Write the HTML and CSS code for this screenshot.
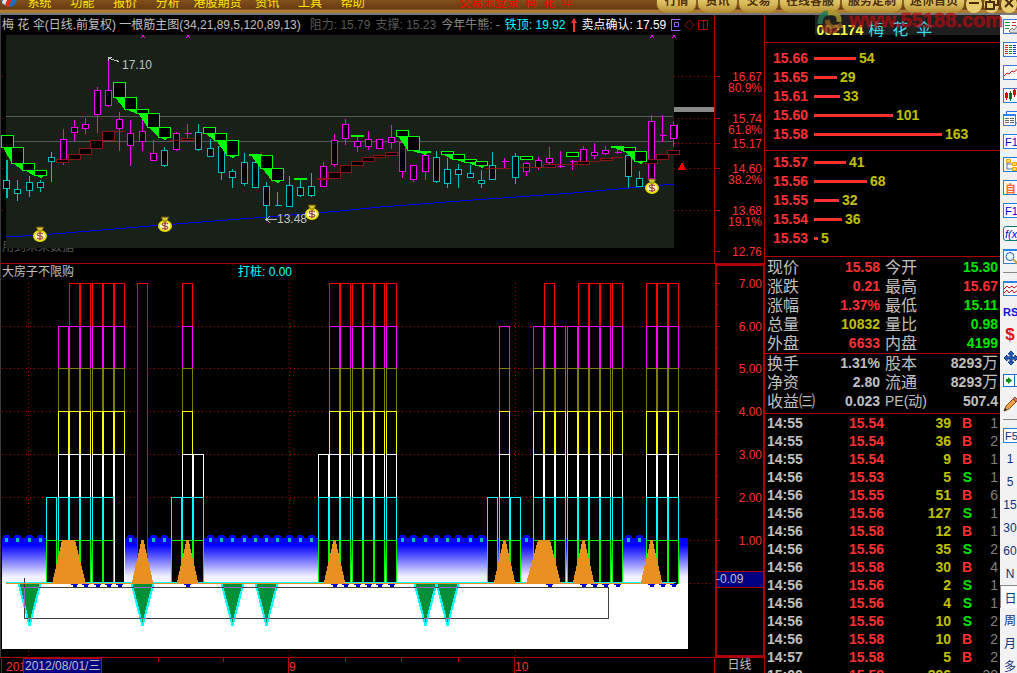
FILE: index.html
```html
<!DOCTYPE html>
<html lang="zh-CN">
<head>
    <meta charset="UTF-8">
    <meta name="viewport" content="width=device-width, initial-scale=1.0">
    <title>梅花伞 002174</title>
    <link rel="stylesheet" href="styles.css">
</head>
<body>

    <div class="app">

        <!-- Menu Bar -->
        <header class="topbar">
            <svg class="logo" width="18" height="20" viewBox="0 0 18 20">
                <circle cx="9" cy="10" r="8" fill="#1c6fc0"/>
                <path d="M2 14 Q5 2 16 5 Q9 7 7 17 Z" fill="#e8e8e8"/>
                <path d="M5 17 Q7 6 16 7 L14 10 Q11 9 9 18 Z" fill="#e03010"/>
            </svg>
            <nav class="menu">
                <button>系统</button>
                <button>功能</button>
                <button>报价</button>
                <button>分析</button>
                <button class="wide">港股期货</button>
                <button>资讯</button>
                <button>工具</button>
                <button>帮助</button>
            </nav>
            <span class="login-state">交易未登录 <i>梅</i><i>花</i><i>伞</i></span>
            <div class="pills">
                <button>行情</button>
                <button>资讯</button>
                <button>交易</button>
                <button class="wide">在线客服</button>
                <button class="wide">服务定制</button>
                <button class="wide">迷你首页</button>
            </div>
            <div class="window-buttons">
                <button aria-label="最小化"><svg width="14" height="14" viewBox="0 0 14 14"><path d="M2 6H12" stroke="#4a2c08" stroke-width="2"/></svg></button>
                <button aria-label="还原"><svg width="14" height="14" viewBox="0 0 14 14"><path d="M5 5V1H13V8H9M1 5H9V12H1Z" fill="none" stroke="#4a2c08" stroke-width="2"/></svg></button>
                <button aria-label="关闭"><svg width="14" height="14" viewBox="0 0 14 14"><path d="M3 2L11 10M11 2L3 10" stroke="#4a2c08" stroke-width="2"/></svg></button>
            </div>
        </header>

        <div class="workspace">

            <!-- Charts -->
            <main class="charts">
                <section class="pane">
                    <div class="plot">
                        <div class="pane-title">
                            <span class="name">梅 花 伞(日线.前复权) 一根筋主图(34,21,89,5,120,89,13)</span>
                            <span class="dark">阻力: 15.79</span>
                            <span class="dark">支撑: 15.23</span>
                            <span class="gray">今年牛熊: -</span>
                            <span class="cyan">铁顶: 19.92</span>
                            <svg class="up" width="6" height="14" viewBox="0 0 6 14"><path d="M2 3H4V14H2Z M0 5L3 0L6 5Z" fill="#ff3030"/></svg>
                            <span class="white">卖点确认: 17.59</span>
                            <svg class="pane-icons" width="39" height="12" viewBox="0 0 39 12" fill="none">
                                <path d="M0 0.500H9.500M0.500 1V11.500H9.500M3.500 3.500H7.500V7.500H3.500Z" stroke="#a060ff"/>
                                <path d="M18.500 1L23 6L18.500 11L14 6Z" stroke="#801010"/>
                                <path d="M27.500 1.500H36.500V10.500H27.500ZM32.500 1V11" stroke="#b00000"/>
                            </svg>
                        </div>
                        <svg id="kline" class="kline" viewBox="0 35 714 228" preserveAspectRatio="none"></svg>
                    </div>
                    <svg id="kline-axis" class="axis" viewBox="714 15 51 248" preserveAspectRatio="none"></svg>
                </section>

                <section class="pane">
                    <div class="plot">
                        <div class="pane-title low">
                            <span class="name">大房子不限购</span>
                            <span class="cyan pile">打桩: 0.00</span>
                        </div>
                        <svg id="steps" class="steps" viewBox="0 280 714 377" preserveAspectRatio="none"></svg>
                    </div>
                    <svg id="steps-axis" class="axis" viewBox="714 264 51 393" preserveAspectRatio="none"></svg>
                </section>

                <footer class="dates">
                    <svg id="dates" viewBox="0 657 714 16" preserveAspectRatio="none"></svg>
                    <span class="period">日线</span>
                </footer>
            </main>

            <!-- Quote Panel -->
            <aside class="quotes">
                <h1><b>002174</b><span>梅</span><span>花</span><span>伞</span></h1>
                <div id="asks" class="orders asks"></div>
                <div id="bids" class="orders bids"></div>
                <table class="stats main-stats">
                    <tr><th>现价</th><td class="red">15.58</td><th>今开</th><td class="green">15.30</td></tr>
                    <tr><th>涨跌</th><td class="red">0.21</td><th>最高</th><td class="red">15.67</td></tr>
                    <tr><th>涨幅</th><td class="red">1.37%</td><th>最低</th><td class="green">15.11</td></tr>
                    <tr><th>总量</th><td class="yellow">10832</td><th>量比</th><td class="green">0.98</td></tr>
                    <tr><th>外盘</th><td class="red">6633</th><th>内盘</th><td class="green">4199</td></tr>
                </table>
                <table class="stats more-stats">
                    <tr><th>换手</th><td>1.31%</td><th>股本</th><td>8293<i>万</i></td></tr>
                    <tr><th>净资</th><td>2.80</td><th>流通</th><td>8293<i>万</i></td></tr>
                    <tr><th>收益㈢</th><td>0.023</td><th class="pe">PE(动)</th><td>507.4</td></tr>
                </table>
                <table class="ticks"><tbody id="ticks"></tbody></table>
            </aside>

            <!-- Tool Bar -->
            <nav class="tools">
                <button aria-label="自选"><svg viewBox="0 0 18 16"><rect x="0.500" y="0.500" width="20" height="14" fill="#fff" stroke="#3a78d8"/><path d="M2 3.500H7M2 6.500H7M2 9.500H6" stroke="#109030"/><path d="M9 3.500H13M9 6.500H13" stroke="#e02020"/><path d="M6 12L9 9L11 11L15 6V14H8Z" fill="#ddd" stroke="#777"/></svg></button>
                <button aria-label="行情列表"><svg viewBox="0 0 18 16"><rect x="0.500" y="0.500" width="20" height="14" fill="#fff" stroke="#3a78d8"/><path d="M2 3.500H5M2 5.500H5M2 7.500H5M2 9.500H5M2 11.500H5" stroke="#e02020"/><path d="M6 3.500H9M6 5.500H9M6 7.500H9M6 9.500H9M6 11.500H9" stroke="#109030"/><path d="M10 3.500H13M10 5.500H13M10 7.500H13M10 9.500H13M10 11.500H13" stroke="#1030c0"/></svg></button>
                <button aria-label="分时图"><svg viewBox="0 0 18 16"><rect x="0.500" y="0.500" width="20" height="14" fill="#fff" stroke="#3a78d8"/><path d="M1 11L4 8L6 9L9 6L11 7L16 3" fill="none" stroke="#d01010"/></svg></button>
                <button aria-label="K线图"><svg viewBox="0 0 18 16"><rect x="0.500" y="0.500" width="20" height="14" fill="#fff" stroke="#3a78d8"/><path d="M3.500 4V12M11.500 1V9" stroke="#e00000"/><path d="M2 5H5V10H2ZM10 2H13V7H10Z" fill="#e00000"/><path d="M7.500 3V13" stroke="#087020"/><path d="M6 5H9V11H6Z" fill="#087020"/></svg></button>
                <button aria-label="窗口"><svg viewBox="0 0 18 16"><path d="M3.500 3V0.500H20V12H13" fill="#fff" stroke="#2a70e0"/><rect x="0.500" y="3.500" width="12" height="11" fill="#fff" stroke="#3a78d8"/><path d="M0 4H13" stroke="#2a80f0" stroke-width="2"/><path d="M2 7.500H6M7 7.500H11M2 9.500H6M7 9.500H11M2 11.500H6M7 11.500H11" stroke="#666"/></svg></button>
                <button class="boxed">F10</button>
                <button aria-label="板块"><svg viewBox="0 0 18 16"><rect x="0.500" y="0.500" width="20" height="14" fill="#fff" stroke="#1080e0"/><path d="M4 5V12H10M4 7H10" fill="none" stroke="#4070b0"/><path d="M3.500 2.500H7.500V5.500H3.500ZM9.500 5.500H13.500V8.500H9.500ZM9.500 10.500H13.500V13.500H9.500Z" fill="#ffe060" stroke="#f0a000"/></svg></button>
                <button class="boxed orange">自</button>
                <button class="boxed">F12</button>
                <button class="boxed fx">f(x)</button>
                <button aria-label="查找"><svg viewBox="0 0 18 16"><rect x="0.500" y="0.500" width="20" height="14" fill="#fff" stroke="#3a78d8"/><path d="M1 1H18" stroke="#2a80f0" stroke-width="2"/><circle cx="7" cy="7.500" r="4" fill="#e8f6ff" stroke="#2060b0"/><path d="M10 10L15 15" stroke="#d0a040" stroke-width="2"/></svg></button>
                <hr>
                <button aria-label="指标"><svg viewBox="0 0 18 16"><rect x="0.500" y="0.500" width="20" height="14" fill="#fff" stroke="#3a78d8"/><path d="M1 1H18" stroke="#2a80f0" stroke-width="2"/><path d="M1 8L4 5L6 7L9 5L11 7L15 4M1 12L4 9L6 12L9 9L11 12L15 9" fill="none" stroke="#d01010"/></svg></button>
                <button class="rsi">RSI</button>
                <button class="dollar">$</button>
                <button aria-label="移动"><svg viewBox="0 0 18 16"><path d="M8 1L11 4H9V7H12V5L15 8L12 11V9H9V12H11L8 15L5 12H7V9H4V11L1 8L4 5V7H7V4H5Z" fill="#2060c0" stroke="#103880"/></svg></button>
                <button aria-label="下一个"><svg viewBox="0 0 18 16"><rect x="0.500" y="1.500" width="20" height="12" fill="#fff" stroke="#1070d0"/><path d="M11.500 1V14" stroke="#1070d0"/><path d="M3 6H5V4L9 7.500L5 11V9H3Z" fill="#089010"/></svg></button>
                <button aria-label="画线"><svg viewBox="0 0 18 16"><path d="M1 15L3 10L10 3L13 6L6 13Z" fill="#f0a040" stroke="#805020"/><path d="M10 3L12 1L15 4L13 6Z" fill="#e07060" stroke="#805020"/><path d="M1 15L2 12L4 14Z" fill="#222"/></svg></button>
                <hr>
                <button class="boxed f5">F5</button>
                <button>1</button>
                <button>5</button>
                <button>15</button>
                <button>30</button>
                <button>60</button>
                <button>N</button>
                <button class="active">日</button>
                <button>周</button>
                <button>月</button>
                <button>多</button>
            </nav>
        </div>

        <!-- Site mark over the page corner -->
        <div class="mark">
            <svg width="32" height="26" viewBox="0 0 32 26" fill="none" stroke-width="5" opacity="0.8">
                <path d="M5 15Q5 4 14 4" stroke="#1c7b54"/>
                <path d="M13 4Q25 2 24 13" stroke="#b09a28"/>
                <path d="M12 11Q14 22 27 16" stroke="#8f5a22"/>
                <path d="M8 17Q14 26 22 20" stroke="#86201c"/>
            </svg>
            <span>www.55188.com</span>
        </div>
    </div>

    <script src="script.js"></script>
</body>
</html>
```

FILE: styles.css
```css
/* --- Base --- */
* {
    box-sizing: border-box;
}

body {
    margin: 0;
    background-color: #000;
    color: #c0c0c0;
    font-family: "Liberation Sans", "Noto Sans CJK SC", sans-serif;
    font-size: 12px;
}

button {
    margin: 0;
    padding: 0;
    border: none;
    background: none;
    font-family: inherit;
    font-size: 12px;
    color: inherit;
    white-space: nowrap;
    cursor: pointer;
}

svg {
    display: block;
    flex-shrink: 0;
}

.app {
    position: relative;
    display: flex;
    flex-direction: column;
    height: 100vh;
    overflow: hidden;
}

/* --- Menu Bar --- */
.topbar {
    display: flex;
    align-items: flex-end;
    flex-shrink: 0;
    height: 15px;
    overflow: hidden;
    border-bottom: 2px solid #777;
    background: linear-gradient(#80501c, #6b3d12 60%, #6b3d12 70%, #b08038 80%, #a87830);
}

.logo {
    margin-bottom: 4px;
}

.menu {
    display: flex;
    width: 356px;
}

.menu button {
    width: 43px;
    height: 19px;
    line-height: 19px;
    color: #ffe800;
}

.menu .wide {
    width: 57px;
}

.login-state {
    margin-left: 85px;
    line-height: 19px;
    color: #ff0000;
    white-space: nowrap;
}

.login-state i {
    margin-left: 3px;
    margin-right: 3px;
    font-style: normal;
}

.pills {
    display: flex;
    margin-left: auto;
}

.pills button {
    width: 41px;
    height: 22px;
    line-height: 19px;
    padding-bottom: 1px;
    border-radius: 0 0 10px 10px;
    background: linear-gradient(#f0dc90, #d8b858 60%, #b08830);
    border-left: 1px solid #8a6020;
    border-right: 1px solid #8a6020;
    color: #503008;
    font-weight: bold;
}

.pills .wide {
    width: 62px;
}

.window-buttons {
    display: flex;
    gap: 2px;
    width: 52px;
    padding-left: 1px;
}

.window-buttons button {
    width: 16px;
    height: 17px;
    padding-left: 1px;
    padding-bottom: 2px;
    border-radius: 8px;
    background-color: #e8cc70;
}

/* --- Workspace --- */
.workspace {
    display: flex;
    flex: 1;
    min-height: 0;
}

.charts {
    flex: 1;
    min-width: 0;
}

.pane {
    display: flex;
}

.pane:first-child {
    border-bottom: 1px solid #b00000;
}

.plot {
    flex: 1;
    min-width: 0;
    box-shadow: inset 1px 0 #3a3a3a;
}

.kline, .steps, .axis, .dates svg {
    shape-rendering: crispEdges;
}

.kline {
    width: 100%;
    height: 228px;
}

.steps {
    width: 100%;
    height: 377px;
}

.axis {
    width: 51px;
}

.pane-title {
    display: flex;
    align-items: center;
    gap: 5px;
    height: 20px;
    padding-left: 2px;
    line-height: 18px;
    white-space: nowrap;
    overflow: hidden;
}

.pane-title .name {
    margin-right: 4px;
}

.low {
    height: 16px;
}

.pane-title .pile {
    margin-left: 155px;
}

.dark { color: #585858; }
.gray { color: #888888; }
.cyan { color: #00ffff; }
.white { color: #ffffff; }
.red { color: #ff3030; }
.green { color: #00e600; }
.yellow { color: #c0c000; }

/* --- Date Row --- */
.dates {
    display: flex;
    border-top: 1px solid #b00000;
}

.dates svg {
    flex: 1;
    min-width: 0;
    height: 16px;
}

.period {
    width: 51px;
    height: 16px;
    line-height: 15px;
    text-align: center;
    border-left: 1px solid #b00000;
    border-right: 1px solid #b00000;
}

/* --- Quote Panel --- */
.quotes {
    width: 235px;
    flex-shrink: 0;
    font-size: 14px;
    overflow: hidden;
}

.quotes h1 {
    display: flex;
    justify-content: center;
    gap: 8px;
    margin: 0;
    height: 28px;
    line-height: 30px;
    border-bottom: 1px solid #b00000;
    padding-right: 16px;
    font-size: 16px;
    font-weight: normal;
    color: #20d8e8;
}

.quotes h1 b {
    margin-right: -3px;
    font-size: 14px;
    color: #ffff30;
}

.orders {
    border-bottom: 1px solid #b00000;
    padding-left: 8px;
    font-weight: bold;
}

.asks {
    padding-top: 6px;
    padding-bottom: 6px;
}

.bids {
    padding-top: 2px;
    padding-bottom: 8px;
}

.order {
    display: flex;
    align-items: center;
    height: 19px;
    line-height: 19px;
}

.order .price {
    width: 41px;
    color: #ff3030;
}

.order .bar {
    height: 3px;
    margin-right: 3px;
    background-color: #ff3030;
}

.order .volume {
    color: #c0c000;
}

table {
    width: 100%;
    border-collapse: separate;
    border-spacing: 0;
    table-layout: fixed;
}

th, td {
    padding: 0;
    white-space: nowrap;
}

.stats {
    border-bottom: 1px solid #b00000;
    padding-left: 2px;
    padding-right: 2px;
}

.stats tr {
    height: 19px;
    line-height: 19px;
}

.stats th {
    width: 50px;
    font-size: 16px;
    font-weight: normal;
    text-align: left;
}

.stats th:nth-child(3) {
    width: 54px;
    padding-left: 5px;
}

.stats .pe {
    font-size: 14px;
}

.stats td {
    text-align: right;
    font-weight: bold;
}

.stats td:nth-child(2) {
    width: 63px;
}

.stats i {
    font-style: normal;
    font-weight: normal;
    font-size: 16px;
    line-height: 16px;
}

.main-stats {
    padding-top: 1px;
}

.more-stats {
    padding-bottom: 2px;
}

.ticks tr {
    height: 18px;
    line-height: 18px;
}

.ticks td {
    font-weight: bold;
    text-align: right;
}

.ticks td:nth-child(1) {
    width: 40px;
    padding-left: 2px;
    text-align: left;
}

.ticks td:nth-child(2) { width: 79px; }
.ticks td:nth-child(3) { width: 67px; }
.ticks td:nth-child(4) { width: 21px; }

.ticks td:nth-child(5) {
    padding-right: 2px;
    font-weight: normal;
    color: #808080;
}

/* --- Tool Bar --- */
.tools {
    display: flex;
    flex-direction: column;
    width: 17px;
    flex-shrink: 0;
    padding-left: 3px;
    overflow: hidden;
    background-color: #f2f2f2;
    color: #103080;
}

.tools button {
    display: flex;
    flex-shrink: 0;
    align-items: center;
    justify-content: center;
    width: 14px;
    height: 23px;
}

.tools svg {
    width: 18px;
    height: 16px;
    margin-right: -4px;
}

.tools hr {
    width: 100%;
    height: 1px;
    flex-shrink: 0;
    margin: 4px 0;
    border: none;
    background-color: #888;
}

.tools .boxed {
    width: 20px;
    height: 15px;
    margin: 4px 0;
    border: 1px solid #2080e0;
    background-color: #fff;
    color: #0000d0;
    justify-content: flex-start;
    padding-left: 1px;
    font-size: 11px;
}

.tools .orange {
    color: #ff6820;
    font-weight: bold;
}

.tools .fx {
    border-color: #008070;
    border-radius: 3px;
    font-style: italic;
}

.tools .f5 {
    color: #103080;
}

.tools .rsi {
    justify-content: flex-start;
    color: #1010e0;
    font-size: 11px;
    font-weight: bold;
}

.tools .dollar {
    color: #e01010;
    font-size: 17px;
    font-weight: bold;
}

.tools .active {
    width: 17px;
    margin-left: -3px;
    padding-left: 3px;
    border-top: 1px solid #888;
    border-left: 1px solid #888;
    background-color: #fafafa;
}

/* --- Site mark --- */
.mark {
    position: absolute;
    top: 8px;
    right: 14px;
    display: flex;
    align-items: center;
    height: 27px;
    pointer-events: none;
    background: linear-gradient(transparent 7px, rgba(255, 255, 255, 0.12) 7px);
}

.mark span {
    margin-left: 2px;
    padding-bottom: 2px;
    font-size: 20px;
    font-weight: bold;
    color: rgba(190, 12, 18, 0.65);
    -webkit-text-stroke: 1px rgba(170, 12, 18, 0.5);
}

/* --- Chart text --- */
svg text {
    font-family: "Liberation Sans", "Noto Sans CJK SC", sans-serif;
    font-size: 12px;
}
```

FILE: script.js
```js
const RED = '#b00000';
const LABEL = '#ff3030';

// x of the centre of day i
const dayX = i => Math.floor(6.55 + i * 11.31) + 0.5;

function rect(x, y, w, h, stroke, fill) {
    return `<rect x="${x}" y="${y}" width="${w}" height="${h}" stroke="${stroke || 'none'}" fill="${fill || 'none'}"/>`;
}
function line(x1, y1, x2, y2, stroke, extra) {
    return `<path d="M${x1} ${y1}L${x2} ${y2}" stroke="${stroke}" ${extra || ''}/>`;
}
function poly(points, fill, stroke) {
    return `<polygon points="${points}" fill="${fill}" stroke="${stroke || 'none'}"/>`;
}
function text(x, y, str, fill, anchor) {
    return `<text x="${x}" y="${y}" fill="${fill}" text-anchor="${anchor || 'start'}">${str}</text>`;
}
const dots = 'stroke-dasharray="1 3"';

/* ---- K line ---- */
// colour, high, body top, body bottom, low
const candles = [
    ['c',160,180,188,197],['c',180,189,193,200],['c',176,182,190,196],['c',180,182,187,191],['c',152,157,161,181],
    ['m',129,139,160,164],['m',120,127,132,140],['m',118,124,128,133],['m',87,90,114,132],['m',60,90,105,106],
    ['m',112,119,128,150],['m',120,133,145,165],['m',117,131,141,150],['m',140,153,160,160],['c',147,150,165,166],
    ['m',132,133,149,150],['m',124,133,133,137],['c',124,132,149,150],['c',139,148,156,156],['c',145,146,172,179],
    ['c',169,171,177,187],['c',153,162,183,185],['c',160,162,187,187],['c',182,186,205,219],['c',192,205,205,205],
    ['c',176,185,206,206],['c',180,187,195,196],['c',173,186,195,196],['m',162,166,186,186],['m',134,140,164,166],
    ['m',119,124,138,144],['m',137,141,146,151],['m',131,139,146,149],['m',139,139,148,148],['m',125,137,142,148],
    ['m',142,142,171,177],['m',165,165,179,181],['m',152,155,171,179],['c',151,157,181,182],['c',158,169,183,187],
    ['c',164,169,174,187],['c',165,173,177,177],['c',170,180,183,187],['c',152,165,179,179],['m',158,161,161,167],
    ['c',153,156,177,183],['m',162,163,171,175],['m',157,160,167,169],['m',147,158,162,164],['m',151,166,166,167],
    ['m',160,161,161,169],['m',146,149,162,163],['m',143,152,155,158],['m',146,150,153,154],['m',148,152,152,153],
    ['c',150,155,176,187],['c',171,178,186,186],['m',115,121,178,193],['m',115,135,135,141],['m',121,125,138,146]
];

// falling runs: x, y, height of each block
const falls = [
    [[1,135,12],[11,147,16],[22,163,7],[34,170,5]],
    [[113,82,15],[124,97,12],[136,109,4],[147,113,14],[158,127,10]],
    [[203,127,6],[214,133,7],[226,140,15]],
    [[249,154,1],[260,155,13],[271,168,12]],
    [[294,178,1]], [[351,135,1]], [[373,134,0]],
    [[396,130,6],[407,136,14],[418,151,1]],
    [[441,151,3],[452,154,5],[464,159,3],[475,161,4]],
    [[520,156,3]], [[566,152,4]],
    [[611,146,1],[623,147,4],[634,151,10]]
];

// rising blocks: x, y, width, height
const rises = [
    [56,159,12,3],[68,154,12,5],[79,148,12,6],[90,140,12,8],[102,131,12,9],[114,131,11,0],[170,140,11,0],[181,138,12,2],
    [317,178,11,1],[328,172,12,6],[340,165,11,7],[351,161,12,4],[362,157,12,4],[373,155,12,2],[385,152,12,3],
    [486,168,25,0],[520,167,24,0],[543,164,12,3],[555,164,22,0],[577,161,12,3],[589,161,11,0],[600,158,12,2],
    [611,157,12,0],[645,159,12,4],[656,154,12,5],[667,150,12,4]
];

function moneyBag(x, y) {
    return `<g transform="translate(${x} ${y})" shape-rendering="auto">
        <path d="M-4 -8H4L2 -4H-2Z" fill="#d8c838" stroke="#5a4a00"/>
        <ellipse cx="0" cy="1" rx="6" ry="5" fill="#fff8c8" stroke="#e8e000" stroke-width="2"/>
        <path d="M-2 -4H2" stroke="#8a6000"/>
        <path d="M3 -1Q2 -2 0 -2Q-3 -2 -3 -1Q-3 1 0 1Q3 1 3 3Q3 4 0 4Q-2 4 -3 3M0 -3V5" fill="none" stroke="#902020"/>
    </g>`;
}

function drawKline() {
    let s = text(2, 251, '用到未来数据', '#585858');
    s += rect(6, 35, 668, 213, null, '#182018');
    s += line(6, 116.5, 673, 116.5, '#585858') + line(6, 141.5, 673, 141.5, '#585858');
    [76.5, 118.5, 143.5, 168.5, 210.5].forEach(y => {
        s += line(674, y, 714, y, RED, dots) + line(2, y, 3, y, RED);
    });
    s += rect(674, 107, 40, 5, null, '#888');
    s += '<path d="M6 237L40 235L90 231L150 226L227 220L267 217L340 211L380 207L473 200L573 193L640 187L674 184" fill="none" stroke="#0000ff"/>';

    candles.forEach(([type, high, top, bottom, low], i) => {
        const x = dayX(i);
        const color = type === 'm' ? '#ff00ff' : '#00c0c0';
        s += line(x, high, x, low + 1, color, i === 0 ? 'stroke-width="2"' : '');
        if (top === bottom) {
            s += line(x - 3, top + 0.5, x + 4, top + 0.5, color);
        } else {
            s += rect(x - 3, top + 0.5, 6, bottom - top, color, '#000');
        }
    });

    rises.forEach(([x, y, w, h]) => {
        s += h === 0 ? line(x, y + 0.5, x + w, y + 0.5, '#8c1414') : rect(x + 0.5, y + 0.5, w, h, '#8c1414', '#000');
    });

    falls.forEach(run => {
        run.forEach(([x, y, h], k) => {
            const next = run[k + 1];
            if (next) {
                s += poly(`${x + 2},${y + h} ${next[0]},${y + h} ${next[0] + 1},${next[1] + next[2] + 1}`, '#00ff00');
            } else if (run.length > 1) {
                s += poly(`${x + 2},${y + h} ${x + 11},${y + h} ${x + 7},${y + h + 3}`, '#00ff00');
            }
            s += rect(x + 0.5, y + 0.5, 12, h, '#00ff00', '#000');
        });
    });

    [[143, 36], [188, 36], [652, 36], [674, 36]].forEach(([x, y]) => {
        s += `<path d="M${x - 2} ${y - 2}L${x + 2} ${y + 2}M${x + 2} ${y - 2}L${x - 2} ${y + 2}" stroke="#ff00ff" shape-rendering="auto"/>`;
    });
    s += '<path d="M119 61.500L108 58M108 61V57.500H112" fill="none" stroke="#c0c0c0"/>' + text(122, 69, '17.10', '#c0c0c0');
    s += '<path d="M277 219.500H266M270 216L266 219.500L270 223" fill="none" stroke="#c0c0c0"/>' + text(277, 223, '13.48', '#c0c0c0');
    s += moneyBag(40, 235) + moneyBag(165, 225) + moneyBag(312, 213) + moneyBag(652, 187);
    s += line(677.5, 124, 677.5, 138, '#ff3030');
    s += poly('678,170 682,162 686,170', '#ff0000');
    document.querySelector('#kline').innerHTML = s;

    let a = line(714.5, 15, 714.5, 263, RED) + line(764.5, 15, 764.5, 263, RED);
    [76, 118, 143, 168, 210, 251].forEach(y => { a += line(714, y + 0.5, 720, y + 0.5, RED); });
    [[81,'16.67'],[92,'80.9%'],[123,'15.74'],[134,'61.8%'],[148,'15.17'],[173,'14.60'],[184,'38.2%'],[215,'13.68'],[226,'19.1%'],[256,'12.76']]
        .forEach(([y, str]) => { a += text(762, y, str, LABEL, 'end'); });
    document.querySelector('#kline-axis').innerHTML = a;
}

/* ---- Step columns ---- */
const levelColor = { 7: '#ff0000', 6: '#ff00ff', 5: '#808000', 4: '#ffff00', 3: '#ffffff', 2: '#00ffff', 1: '#00ff00' };
const all = [7, 6, 5, 4, 3, 2, 1];
const steps = {
    4: [2, 1], 5: all.slice(1), 6: all, 7: all, 8: all, 9: all, 10: [7, 6, 5, 4, 3], 12: [7],
    15: [2, 1], 16: all, 17: [3, 2, 1],
    28: [3, 2, 1], 29: all, 30: all, 31: all, 32: all, 33: all, 34: all,
    43: [2, 1], 44: all.slice(1), 45: [2, 1],
    47: all.slice(1), 48: all, 49: all.slice(1), 50: all.slice(1), 51: all, 52: all, 53: all, 54: all,
    57: all, 58: all, 59: all
};
const levelY = v => 583.5 - Math.round(v * 42.9);

function drawSteps() {
    let s = '<defs><linearGradient id="sky" x1="0" y1="0" x2="0" y2="1"><stop offset="0" stop-color="#0000ff"/><stop offset="0.15" stop-color="#0000ff"/><stop offset="0.85" stop-color="#f0f0ff"/><stop offset="1" stop-color="#f4f4ff"/></linearGradient></defs>';
    for (let v = 0; v <= 6; v++) s += line(2, levelY(v), 714, levelY(v), RED, dots);
    [28.5, 289.5, 515.5].forEach(x => { s += line(x, 283, x, 657, RED, dots); });
    s += rect(2, 538, 686, 45, null, 'url(#sky)') + rect(2, 583, 686, 66, null, '#fff');

    for (let i = 0; i < 57; i++) {
        if (steps[i]) continue;
        s += `<circle cx="${dayX(i)}" cy="539" r="4" fill="#0000ff"/><circle cx="${dayX(i)}" cy="540" r="2" fill="#00c0c0"/>`;
    }
    // small marks under the base line
    [6, 7, 8, 9, 10, 16, 29, 30, 31, 32, 33, 34, 48, 51, 52, 53, 54, 57, 58, 59].forEach(i => {
        s += rect(dayX(i) - 3.5, 583, 7, 2, null, '#0000ff') + rect(dayX(i) - 1.5, 585, 4, 2, null, '#0000c0');
    });

    Object.keys(steps).forEach(i => {
        const x = dayX(i) - 5;
        const levels = steps[i];
        s += rect(x, levelY(levels[0]), 10, 583.5 - levelY(levels[0]), null, '#000');
        levels.forEach((v, k) => {
            const end = k + 1 < levels.length ? levelY(levels[k + 1]) : 583.5;
            s += `<path d="M${x} ${end}V${levelY(v)}H${x + 10}V${end}" fill="none" stroke="${levelColor[v]}"/>`;
        });
    });

    s += line(6, 582.5, 676, 582.5, '#00ffff');
    [2, 12, 20, 23, 37, 39].forEach(i => {
        const x = dayX(i);
        s += `<polygon points="${x - 11},583 ${x + 11},583 ${x},626" fill="#009038" stroke="#00ffff" stroke-width="2"/>`;
    });
    s += rect(24.5, 587.5, 584, 31, '#404040');
    [2, 12, 20, 23, 37, 39].forEach(i => {
        s += line(dayX(i) - 9, 587.5, dayX(i) + 9, 587.5, '#a060d0') + line(dayX(i) - 2, 618.5, dayX(i) + 3, 618.5, '#a060d0');
    });
    s += line(24.5, 578, 24.5, 588, '#303050') + line(24.5, 588, 24.5, 608, '#a060d0');

    [12, 16, 29, 44, 51, 57].forEach(i => {
        const x = dayX(i);
        s += poly(`${x - 11},584 ${x - 1},540 ${x + 1},540 ${x + 11},584`, '#e89020');
    });
    s += poly('52,584 62,540 75,540 86,584', '#e89020') + poly('526,584 538,540 550,540 561,584', '#e89020');
    s += line(6, 583.5, 674, 583.5, '#e89020');
    document.querySelector('#steps').innerHTML = s;

    let a = `<rect x="716" y="265" width="48" height="391" fill="none" stroke="${RED}" stroke-width="2"/>`;
    for (let v = 1; v <= 7; v++) {
        a += line(716, levelY(v), 720, levelY(v), RED) + line(716, levelY(v - 0.5), 718, levelY(v - 0.5), RED);
        a += text(762, levelY(v) + 4.5, v + '.00', LABEL, 'end');
    }
    a += rect(716, 571.5, 47, 16, RED, '#000080') + text(716, 583, '-0.09', '#c0c0c0');
    document.querySelector('#steps-axis').innerHTML = a;

    let d = text(6, 670, '201', LABEL) + rect(23.5, 657.5, 78, 16, RED, '#000080') + text(25, 669, '2012/08/01/三', '#c0c0c0');
    d += line(1.5, 657, 1.5, 673, RED) + line(288.5, 657, 288.5, 673, RED) + line(514.5, 657, 514.5, 673, RED);
    [158.5, 223.5, 345.5, 401.5, 458.5].forEach(x => { d += line(x, 657, x, 661, RED); });
    d += text(289, 670, '9', LABEL) + text(515, 670, '10', LABEL);
    document.querySelector('#dates').innerHTML = d;
}

/* ---- Quote panel ---- */
function drawOrders(id, rows) {
    document.querySelector(id).innerHTML = rows.map(([price, volume]) =>
        `<div class="order"><span class="price">${price}</span><span class="bar" style="width:${Math.round(volume * 0.786)}px"></span><span class="volume">${volume}</span></div>`
    ).join('');
}

const trades = [
    ['14:55','15.54',39,'B',1],['14:55','15.54',36,'B',2],['14:55','15.54',9,'B',1],['14:56','15.53',5,'S',1],
    ['14:56','15.55',51,'B',6],['14:56','15.56',127,'S',1],['14:56','15.58',12,'B',1],['14:56','15.56',35,'S',2],
    ['14:56','15.58',30,'B',4],['14:56','15.56',2,'S',1],['14:56','15.56',4,'S',1],['14:56','15.56',10,'S',2],
    ['14:56','15.58',10,'B',2],['14:57','15.58',5,'B',2],['15:00','15.58',396,'',30]
];

drawKline();
drawSteps();
drawOrders('#asks', [['15.66', 54], ['15.65', 29], ['15.61', 33], ['15.60', 101], ['15.58', 163]]);
drawOrders('#bids', [['15.57', 41], ['15.56', 68], ['15.55', 32], ['15.54', 36], ['15.53', 5]]);
document.querySelector('#ticks').innerHTML = trades.map(([time, price, volume, side, count]) =>
    `<tr><td>${time}</td><td class="red">${price}</td><td class="yellow">${volume}</td><td class="${side === 'B' ? 'red' : 'green'}">${side}</td><td>${count}</td></tr>`
).join('');
```
